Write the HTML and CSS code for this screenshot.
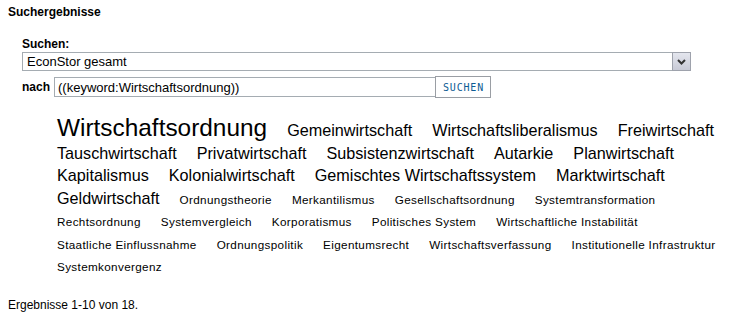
FILE: index.html
```html
<!DOCTYPE html>
<html lang="de">
<head>
    <meta charset="UTF-8">
    <title>Suchergebnisse</title>
    <link rel="stylesheet" href="styles.css">
</head>
<body>

    <h2 class="title">Suchergebnisse</h2>

    <form class="search">
        <div class="label">Suchen:</div>
        <div class="select">
            <span class="select-text">EconStor gesamt</span>
            <span class="select-arrow">
                <svg width="9" height="6" viewBox="0 0 9 6"><path d="M1 1 L4.5 4.5 L8 1" fill="none" stroke="#333" stroke-width="2"/></svg>
            </span>
        </div>
        <div class="query-row">
            <span class="label">nach</span>
            <input class="query" type="text" value="((keyword:Wirtschaftsordnung))">
            <button class="search-btn" type="button">SUCHEN</button>
        </div>
    </form>

    <!-- Schlagwortwolke -->
    <div class="cloud">
        <a class="tag big">Wirtschaftsordnung</a>
        <a class="tag mid">Gemeinwirtschaft</a>
        <a class="tag mid">Wirtschaftsliberalismus</a>
        <a class="tag mid">Freiwirtschaft</a>
        <a class="tag mid">Tauschwirtschaft</a>
        <a class="tag mid">Privatwirtschaft</a>
        <a class="tag mid">Subsistenzwirtschaft</a>
        <a class="tag mid">Autarkie</a>
        <a class="tag mid">Planwirtschaft</a>
        <a class="tag mid">Kapitalismus</a>
        <a class="tag mid">Kolonialwirtschaft</a>
        <a class="tag mid">Gemischtes Wirtschaftssystem</a>
        <a class="tag mid">Marktwirtschaft</a>
        <a class="tag mid">Geldwirtschaft</a>
        <a class="tag small">Ordnungstheorie</a>
        <a class="tag small">Merkantilismus</a>
        <a class="tag small">Gesellschaftsordnung</a>
        <a class="tag small">Systemtransformation</a>
        <a class="tag small">Rechtsordnung</a>
        <a class="tag small">Systemvergleich</a>
        <a class="tag small">Korporatismus</a>
        <a class="tag small">Politisches System</a>
        <a class="tag small">Wirtschaftliche Instabilität</a>
        <a class="tag small">Staatliche Einflussnahme</a>
        <a class="tag small">Ordnungspolitik</a>
        <a class="tag small">Eigentumsrecht</a>
        <a class="tag small">Wirtschaftsverfassung</a>
        <a class="tag small">Institutionelle Infrastruktur</a>
        <a class="tag small">Systemkonvergenz</a>
    </div>

    <p class="count">Ergebnisse 1-10 von 18.</p>

</body>
</html>
```

FILE: styles.css
```css
body {
    font-family: 'Liberation Sans', Arial, sans-serif;
    margin: 0;
    padding: 5px 8px;
    background-color: #fff;
    color: #000;
}

.title {
    font-size: 12px;
    font-weight: bold;
    margin: 0;
    line-height: 15px;
}

.search {
    margin: 17px 0 0 14px;
}

.label {
    font-size: 12px;
    font-weight: bold;
    line-height: 15px;
}

.select {
    display: flex;
    align-items: stretch;
    width: 669px;
    height: 19px;
    box-sizing: border-box;
    border: 1px solid #a5acb2;
}

.select-text {
    flex: 1;
    font-size: 13px;
    line-height: 17px;
    padding-left: 4px;
}

.select-arrow {
    width: 17px;
    margin: -1px -1px -1px 0;
    border: 1px solid #9ea2ac;
    background: linear-gradient(#e4e6ee, #c8cad6);
    display: flex;
    align-items: center;
    justify-content: center;
}

.query-row {
    display: flex;
    align-items: center;
    margin-top: 5px;
}

.query-row .label {
    margin-right: 4px;
}

.query {
    width: 381px;
    height: 20px;
    box-sizing: border-box;
    border: 1px solid #a5acb2;
    border-right: none;
    padding: 0 3px;
    font-family: 'Liberation Sans', Arial, sans-serif;
    font-size: 13px;
    color: #000;
    outline: none;
}

.search-btn {
    width: 56px;
    height: 22px;
    box-sizing: border-box;
    border: 1px solid #9a9ea4;
    background: #fff;
    color: #0d5c94;
    font-family: 'DejaVu Sans Mono', monospace;
    font-size: 10px;
    letter-spacing: 0.8px;
    padding: 0 0 0 1px;
}

.cloud {
    display: flex;
    flex-wrap: wrap;
    align-items: baseline;
    column-gap: 20px;
    margin: 18px 10px 0 49px;
}

.tag {
    color: #000;
    text-decoration: none;
    cursor: pointer;
    line-height: 22.5px;
}

.big {
    font-size: 24.4px;
    line-height: 24px;
}

.mid {
    font-size: 16.2px;
}

.small {
    font-size: 11.7px;
    letter-spacing: 0.35px;
}

.count {
    font-size: 12px;
    margin: 19px 0 0 0;
}
```
